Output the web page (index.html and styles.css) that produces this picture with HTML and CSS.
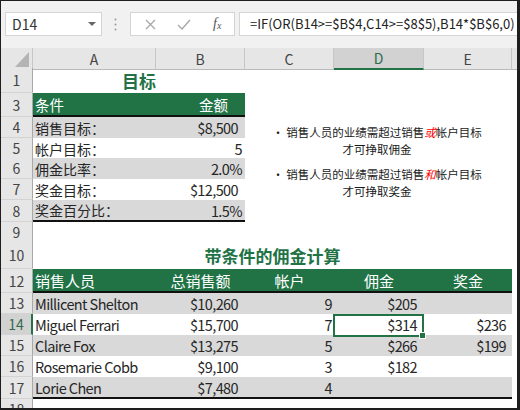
FILE: index.html
```html
<!DOCTYPE html>
<html lang="zh-CN">
<head>
<meta charset="utf-8">
<title>佣金计算</title>
<link rel="stylesheet" href="styles.css">
</head>
<body>
<div class="frame">
  <div class="fbar">
    <div class="namebox"><span>D14</span>
      <svg class="caret" width="8" height="4" viewBox="0 0 8 4"><path d="M0 0H8L4 4Z" fill="#666"/></svg>
    </div>
    <svg class="dots" width="3" height="13" viewBox="0 0 3 13"><circle cx="1.5" cy="1.5" r="1" fill="#9a9a9a"/><circle cx="1.5" cy="6.5" r="1" fill="#9a9a9a"/><circle cx="1.5" cy="11.5" r="1" fill="#9a9a9a"/></svg>
    <div class="fxbox">
      <svg class="ic-x" width="11" height="11" viewBox="0 0 11 11"><path d="M1 1L10 10M10 1L1 10" stroke="#a8a8a8" stroke-width="1.3" fill="none"/></svg>
      <svg class="ic-ok" width="14" height="11" viewBox="0 0 14 11"><path d="M1 6L5 10L13 1" stroke="#a8a8a8" stroke-width="1.4" fill="none"/></svg>
      <span class="fx">f<sub>x</sub></span>
    </div>
    <div class="formula">=IF(OR(B14&gt;=$B$4,C14&gt;=$8$5),B14*$B$6,0)</div>
  </div>

  <div class="sheet">
    <div class="row r-ch">
      <div class="corner"><svg width="14" height="15" viewBox="0 0 14 15"><path d="M14 0V15H0Z" fill="#b4b4b4"/></svg></div>
      <div class="ch">A</div><div class="ch">B</div><div class="ch">C</div><div class="ch ch-sel">D</div><div class="ch">E</div><div class="ch ch-end"></div>
    </div>

    <div class="row r-25">
      <div class="rh">1</div>
      <div class="c title span2">目标</div>
    </div>
    <div class="row r-24">
      <div class="rh">3</div>
      <div class="c head bb">条件</div>
      <div class="c head bb hright pr17">金额</div>
    </div>
    <div class="row r-21">
      <div class="rh">4</div>
      <div class="c g">销售目标：</div>
      <div class="c g num pr7">$8,500</div>
    </div>
    <div class="row r-20">
      <div class="rh">5</div>
      <div class="c">帐户目标：</div>
      <div class="c num pr3">5</div>
    </div>
    <div class="row r-21">
      <div class="rh">6</div>
      <div class="c g">佣金比率：</div>
      <div class="c g num pr3">2.0%</div>
    </div>
    <div class="row r-21">
      <div class="rh">7</div>
      <div class="c">奖金目标：</div>
      <div class="c num pr7">$12,500</div>
    </div>
    <div class="row r-22">
      <div class="rh">8</div>
      <div class="c g bb">奖金百分比：</div>
      <div class="c g bb num pr3">1.5%</div>
    </div>
    <div class="row r-20">
      <div class="rh">9</div>
    </div>
    <div class="row r-27">
      <div class="rh">10</div>
      <div class="c title span5">带条件的佣金计算</div>
    </div>
    <div class="row r-24">
      <div class="rh">12</div>
      <div class="c head2 bb">销售人员</div>
      <div class="c head2 bb center">总销售额</div>
      <div class="c head2 bb center">帐户</div>
      <div class="c head2 bb center">佣金</div>
      <div class="c head2 bb center">奖金</div>
    </div>
    <div class="row r-21">
      <div class="rh">13</div>
      <div class="c g lat">Millicent Shelton</div>
      <div class="c g num pr7">$10,260</div>
      <div class="c g num pr2">9</div>
      <div class="c g num pr7">$205</div>
      <div class="c g num pr6"></div>
    </div>
    <div class="row r-21">
      <div class="rh rh-sel">14</div>
      <div class="c lat">Miguel Ferrari</div>
      <div class="c num pr7">$15,700</div>
      <div class="c num pr2">7</div>
      <div class="c num pr7 active">$314</div>
      <div class="c num pr6">$236</div>
    </div>
    <div class="row r-21">
      <div class="rh">15</div>
      <div class="c g lat">Claire Fox</div>
      <div class="c g num pr7">$13,275</div>
      <div class="c g num pr2">5</div>
      <div class="c g num pr7">$266</div>
      <div class="c g num pr6">$199</div>
    </div>
    <div class="row r-21">
      <div class="rh">16</div>
      <div class="c lat">Rosemarie Cobb</div>
      <div class="c num pr7">$9,100</div>
      <div class="c num pr2">3</div>
      <div class="c num pr7">$182</div>
      <div class="c num pr6"></div>
    </div>
    <div class="row r-22">
      <div class="rh">17</div>
      <div class="c g bb lat">Lorie Chen</div>
      <div class="c g bb num pr7">$7,480</div>
      <div class="c g bb num pr2">4</div>
      <div class="c g bb num pr7"></div>
      <div class="c g bb num pr6"></div>
    </div>
    <div class="row r-20">
      <div class="rh">18</div>
    </div>

    <div class="note">
      <p>• 销售人员的业绩需超过销售<em>或</em>帐户目标<br>才可挣取佣金</p>
      <p>• 销售人员的业绩需超过销售<em>和</em>帐户目标<br>才可挣取奖金</p>
    </div>
  </div>
</div>
</body>
</html>
```

FILE: styles.css
```css
html, body {
  margin: 0;
  padding: 0;
  background: #fff;
}

.frame {
  width: 520px;
  height: 410px;
  box-sizing: border-box;
  border-style: solid;
  border-color: #1e1e1e;
  border-width: 1px 3px 2px 1px;
  overflow: hidden;
  position: relative;
  background: #fff;
  font-family: "Noto Sans CJK SC", "Noto Sans", sans-serif;
  color: #262626;
}

/* formula bar */
.fbar {
  height: 47px;
  box-sizing: border-box;
  background: #f1f1f1;
  display: flex;
  align-items: flex-start;
  padding: 11px 0 0 4px;
}

.namebox {
  width: 97px;
  height: 24px;
  box-sizing: border-box;
  border: 1px solid #d4d4d4;
  background: #fff;
  display: flex;
  align-items: center;
  justify-content: space-between;
  padding: 0 5px 0 6px;
  font-size: 14px;
  color: #333;
}

.dots {
  margin: 6px 0 0 12px;
}

.fxbox {
  margin-left: 13px;
  width: 105px;
  height: 24px;
  box-sizing: border-box;
  border: 1px solid #d4d4d4;
  background: #fff;
  display: flex;
  align-items: center;
  padding-left: 14px;
}

.ic-ok {
  margin-left: 21px;
}

.fx {
  margin-left: 22px;
  font-family: "Liberation Serif", serif;
  font-style: italic;
  font-size: 14px;
  color: #555;
  line-height: 1;
}

.fx sub {
  font-size: 10px;
  vertical-align: -1px;
}

.formula {
  margin-left: 4px;
  flex: 1;
  height: 24px;
  box-sizing: border-box;
  border: 1px solid #d4d4d4;
  border-right: none;
  background: #fff;
  padding-left: 10px;
  font-size: 13px;
  line-height: 22px;
  color: #222;
  white-space: nowrap;
  overflow: hidden;
}

/* sheet */
.sheet {
  position: relative;
}

.row {
  display: grid;
  grid-template-columns: 32px 123px 89px 89px 90px 88px 1fr;
}

.r-ch { height: 20px; }
.r-20 { height: 20px; }
.r-21 { height: 21px; }
.r-22 { height: 22px; }
.r-24 { height: 24px; }
.r-25 { height: 25px; }
.r-27 { height: 27px; }

.corner {
  background: #e6e6e6;
  border-right: 1px solid #c6c6c6;
  border-bottom: 1px solid #b9b9b9;
  box-sizing: border-box;
  display: flex;
  align-items: flex-end;
  justify-content: flex-end;
  padding: 0 3px 2px 0;
}

.ch {
  background: #e6e6e6;
  border-right: 1px solid #c6c6c6;
  border-bottom: 1px solid #b9b9b9;
  box-sizing: border-box;
  display: flex;
  align-items: center;
  justify-content: center;
  font-size: 14px;
  color: #444;
}

.ch-sel {
  background: #d2d2d2;
  border-bottom: 2px solid #217346;
  color: #2f6b4c;
}

.ch-end {
  border-right: none;
}

.rh {
  grid-column: 1;
  background: #e6e6e6;
  border-right: 1px solid #a9a9a9;
  border-bottom: 1px solid #d3d3d3;
  box-sizing: border-box;
  display: flex;
  align-items: center;
  justify-content: center;
  font-size: 14px;
  color: #444;
}

.rh-sel {
  background: #d2d2d2;
  border-right: 2px solid #217346;
  color: #2f6b4c;
}

.c {
  box-sizing: border-box;
  display: flex;
  align-items: center;
  padding-left: 2px;
  font-size: 14px;
  white-space: nowrap;
  overflow: hidden;
}

.lat,
.num {
  font-size: 14.5px;
  letter-spacing: -0.6px;
}

.num { justify-content: flex-end; padding-left: 0; }
.hright { justify-content: flex-end; padding-left: 0; }
.center { justify-content: center; padding-left: 0; }
.pr2 { padding-right: 2px; }
.pr3 { padding-right: 3px; }
.pr6 { padding-right: 6px; }
.pr7 { padding-right: 7px; }
.pr17 { padding-right: 17px; }

.g { background: #d9d9d9; }
.bb { border-bottom: 2px solid #111; }

.span2 { grid-column: 2 / span 2; }
.span5 { grid-column: 2 / span 5; }

.title {
  justify-content: center;
  padding-left: 0;
  font-weight: bold;
  font-size: 17px;
  color: #217346;
}

.head {
  background: #217346;
  color: #fff;
  font-size: 14.5px;
}

.head2 {
  background: #217346;
  color: #fff;
  font-size: 15px;
}

.active {
  position: relative;
  overflow: visible;
}

.active::after {
  content: "";
  position: absolute;
  left: -1px;
  top: 0;
  right: 0;
  bottom: -2px;
  border: 2px solid #217346;
}

.active::before {
  content: "";
  position: absolute;
  right: -2px;
  bottom: -4px;
  width: 5px;
  height: 5px;
  background: #217346;
  border: 1px solid #fff;
  z-index: 2;
}

/* text box */
.note {
  position: absolute;
  left: 264px;
  top: 76px;
  width: 224px;
  text-align: center;
  font-size: 11.5px;
  line-height: 17px;
  color: #1a1a1a;
}

.note p {
  margin: 0 0 8px;
}

.note em {
  color: #ff0000;
  font-style: italic;
}
```
